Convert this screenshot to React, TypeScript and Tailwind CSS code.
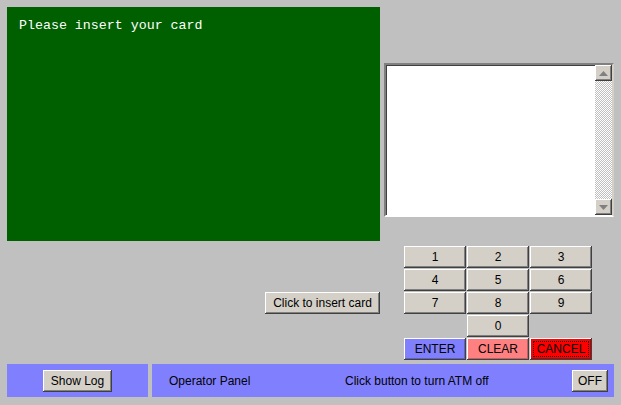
const raised =
  'bg-[#d4d0c8] shadow-[inset_-1px_-1px_#404040,inset_1px_1px_#ffffff,inset_-2px_-2px_#808080]';

function KeyButton({ label, className = '' }: { label: string; className?: string }) {
  return (
    <button
      className={`w-[62px] h-[22px] flex items-center justify-center text-[12px] text-black ${className}`}
    >
      {label}
    </button>
  );
}

function ScrollArrow({ up }: { up?: boolean }) {
  return (
    <div className={`w-[17px] h-[16px] flex items-center justify-center ${raised}`}>
      <svg width="9" height="5" viewBox="0 0 9 5">
        {up ? <path d="M4.5 0 L9 5 L0 5 Z" fill="#808080" /> : <path d="M0 0 L9 0 L4.5 5 Z" fill="#808080" />}
      </svg>
    </div>
  );
}

export default function App() {
  const keys = ['1', '2', '3', '4', '5', '6', '7', '8', '9'];

  return (
    <div className="w-[621px] h-[405px] bg-[#c0c0c0] overflow-hidden font-['Liberation_Sans',Arial,sans-serif]">
      {/* Screen + log */}
      <div className="flex pt-[7px] pl-[7px]">
        <div className="w-[373px] h-[234px] bg-[#006000] pl-[12px] pt-[11px]">
          <p className="text-white text-[13.3px] leading-[16px] font-['Liberation_Mono','Courier_New',monospace]">
            Please insert your card
          </p>
        </div>
        <div className="ml-[4px] mt-[56px] w-[230px] h-[154px] flex bg-white border-2 border-t-[#808080] border-l-[#808080] border-b-white border-r-[#d4d0c8] shadow-[inset_1px_1px_#404040]">
          <div className="flex-1" />
          <div className="w-[17px] flex flex-col bg-[repeating-conic-gradient(#c0c0c0_0%_25%,#ffffff_0%_50%)] bg-[length:2px_2px]">
            <ScrollArrow up />
            <div className="flex-1" />
            <ScrollArrow />
          </div>
        </div>
      </div>

      {/* Card button + keypad */}
      <div className="flex ml-[265px] mt-[5px]">
        <button
          className={`mt-[46px] w-[115px] h-[22px] text-[12px] text-black flex items-center justify-center ${raised}`}
        >
          Click to insert card
        </button>
        <div className="ml-[24px] grid grid-cols-[repeat(3,62px)] auto-rows-[22px] gap-[1px]">
          {keys.map((k) => (
            <KeyButton key={k} label={k} className={raised} />
          ))}
          <div />
          <KeyButton label="0" className={raised} />
          <div />
          <KeyButton
            label="ENTER"
            className="bg-[#8080ff] shadow-[inset_-1px_-1px_#404040,inset_1px_1px_#ffffff,inset_-2px_-2px_#6060c0]"
          />
          <KeyButton
            label="CLEAR"
            className="bg-[#ff8080] shadow-[inset_-1px_-1px_#404040,inset_1px_1px_#ffffff,inset_-2px_-2px_#c06060]"
          />
          <button className="w-[62px] h-[22px] p-[3px] bg-[#ff0000] shadow-[inset_-1px_-1px_#404040,inset_1px_1px_#ffffff,inset_-2px_-2px_#c00000]">
            <span className="w-full h-full flex items-center justify-center border border-dotted border-black text-[12px] text-black">
              CANCEL
            </span>
          </button>
        </div>
      </div>

      {/* Operator bar */}
      <div className="flex ml-[7px] mt-[4px] gap-[4px]">
        <div className="w-[141px] h-[33px] bg-[#8080ff] flex items-center justify-center">
          <button className={`w-[69px] h-[22px] text-[12px] text-black flex items-center justify-center ${raised}`}>
            Show Log
          </button>
        </div>
        <div className="w-[462px] h-[33px] bg-[#8080ff] flex items-center pl-[17px] pr-[6px] text-[12px] text-black">
          <span className="w-[176px]">Operator Panel</span>
          <span>Click button to turn ATM off</span>
          <button className={`ml-auto w-[36px] h-[22px] text-[12px] text-black flex items-center justify-center ${raised}`}>
            OFF
          </button>
        </div>
      </div>
    </div>
  );
}
